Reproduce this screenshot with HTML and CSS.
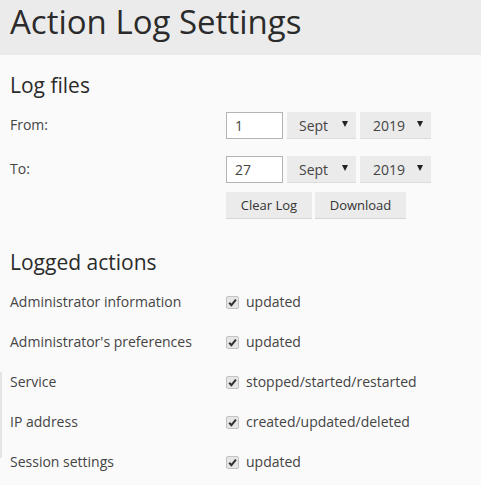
FILE: index.html
```html
<!DOCTYPE html>
<html lang="en">
<head>
<meta charset="utf-8">
<title>Action Log Settings</title>
<link rel="stylesheet" href="styles.css">
</head>
<body>
<header class="page-header">
  <h1 class="page-title">Action Log Settings</h1>
</header>
<main class="content">
  <section class="section">
    <h2 class="section-title">Log files</h2>
    <div class="form-rows">
      <div class="form-row">
        <div class="form-label">From:</div>
        <div class="controls">
          <input class="text-input" type="text" value="1">
          <div class="select select-month"><span>Sept</span><span class="arrow"></span></div>
          <div class="select select-year"><span>2019</span><span class="arrow"></span></div>
        </div>
      </div>
      <div class="form-row">
        <div class="form-label">To:</div>
        <div class="controls">
          <input class="text-input" type="text" value="27">
          <div class="select select-month"><span>Sept</span><span class="arrow"></span></div>
          <div class="select select-year"><span>2019</span><span class="arrow"></span></div>
        </div>
      </div>
      <div class="form-row buttons-row">
        <div></div>
        <div class="controls">
          <button class="btn btn-clear">Clear Log</button>
          <button class="btn btn-download">Download</button>
        </div>
      </div>
    </div>
  </section>
  <section class="section section-actions">
    <h2 class="section-title">Logged actions</h2>
    <div class="action-grid">
      <div class="action-label">Administrator information</div>
      <label class="check"><span class="box"><svg viewBox="0 0 13 13" width="13" height="13"><path d="M3.2 6.8 L5.4 9.2 L9.9 3.6" fill="none" stroke="#333" stroke-width="2"/></svg></span>updated</label>
      <div class="action-label">Administrator's preferences</div>
      <label class="check"><span class="box"><svg viewBox="0 0 13 13" width="13" height="13"><path d="M3.2 6.8 L5.4 9.2 L9.9 3.6" fill="none" stroke="#333" stroke-width="2"/></svg></span>updated</label>
      <div class="action-label">Service</div>
      <label class="check"><span class="box"><svg viewBox="0 0 13 13" width="13" height="13"><path d="M3.2 6.8 L5.4 9.2 L9.9 3.6" fill="none" stroke="#333" stroke-width="2"/></svg></span>stopped/started/restarted</label>
      <div class="action-label">IP address</div>
      <label class="check"><span class="box"><svg viewBox="0 0 13 13" width="13" height="13"><path d="M3.2 6.8 L5.4 9.2 L9.9 3.6" fill="none" stroke="#333" stroke-width="2"/></svg></span>created/updated/deleted</label>
      <div class="action-label">Session settings</div>
      <label class="check"><span class="box"><svg viewBox="0 0 13 13" width="13" height="13"><path d="M3.2 6.8 L5.4 9.2 L9.9 3.6" fill="none" stroke="#333" stroke-width="2"/></svg></span>updated</label>
    </div>
  </section>
  <div class="edge-mark"></div>
</main>
</body>
</html>
```

FILE: styles.css
```css
html, body {
  margin: 0;
  padding: 0;
}
body {
  background: #fafafa;
  font-family: "Open Sans", "Liberation Sans", sans-serif;
  color: #444;
  font-size: 14px;
}
.page-header {
  background: #ebebeb;
  height: 55px;
  padding: 0 10px;
  box-sizing: border-box;
}
.page-title {
  margin: 0;
  font-size: 33px;
  font-weight: 400;
  line-height: 44px;
  color: #2b2b2b;
}
.content {
  position: relative;
  padding: 0 10px;
}
.section-title {
  margin: 0;
  font-size: 21px;
  font-weight: 400;
  line-height: 27px;
  color: #2b2b2b;
}
.section {
  padding-top: 17px;
}
.section-actions {
  padding-top: 30px;
}
.form-rows {
  display: flex;
  flex-direction: column;
  gap: 17px;
  margin-top: 13px;
}
.form-row {
  display: grid;
  grid-template-columns: 216px 1fr;
  height: 27px;
}
.form-rows .buttons-row {
  margin-top: -8px;
}
.form-label {
  display: flex;
  align-items: center;
  line-height: 20px;
  padding-bottom: 2px;
}
.controls {
  display: flex;
  gap: 4px;
  align-items: stretch;
}
.text-input {
  width: 57px;
  height: 27px;
  box-sizing: border-box;
  border: 1px solid #b4b4b4;
  background: #fff;
  padding: 0 8px;
  font-family: inherit;
  font-size: 14px;
  color: #444;
  margin: 0;
  outline: none;
}
.select {
  display: flex;
  align-items: center;
  justify-content: space-between;
  background: #ebebeb;
  border-bottom: 1px solid #dcdcdc;
  box-sizing: border-box;
  height: 27px;
  padding: 0 8px 0 12px;
  color: #444;
}
.select-month { width: 69px; }
.select-year { width: 71px; padding-left: 13px; }
.arrow {
  width: 0;
  height: 0;
  border-left: 3px solid transparent;
  border-right: 3px solid transparent;
  border-top: 6px solid #222;
  margin-bottom: 3px;
}
.btn {
  height: 27px;
  box-sizing: border-box;
  border: none;
  border-bottom: 1px solid #d6d6d6;
  background: #ebebeb;
  font-family: inherit;
  font-size: 13px;
  color: #333;
  padding: 0;
  margin: 0;
}
.btn-clear { width: 86px; }
.btn-download { width: 91px; margin-left: -1px; }
.action-grid {
  display: grid;
  grid-template-columns: 216px 1fr;
  grid-auto-rows: 40px;
  margin-top: 6px;
}
.action-label, .check {
  display: flex;
  align-items: center;
  padding-bottom: 1px;
}
.check {
  gap: 7px;
}
.box {
  width: 13px;
  height: 13px;
  box-sizing: border-box;
  border: 1px solid #c2c2c2;
  border-radius: 2px;
  background: #e6e6e6;
  display: flex;
  align-items: center;
  justify-content: center;
  margin-top: 1px;
}
.box svg {
  display: block;
  flex: none;
}
.edge-mark {
  position: absolute;
  left: 0;
  top: 317px;
  width: 2px;
  height: 86px;
  background: #e4e4e4;
}
```
